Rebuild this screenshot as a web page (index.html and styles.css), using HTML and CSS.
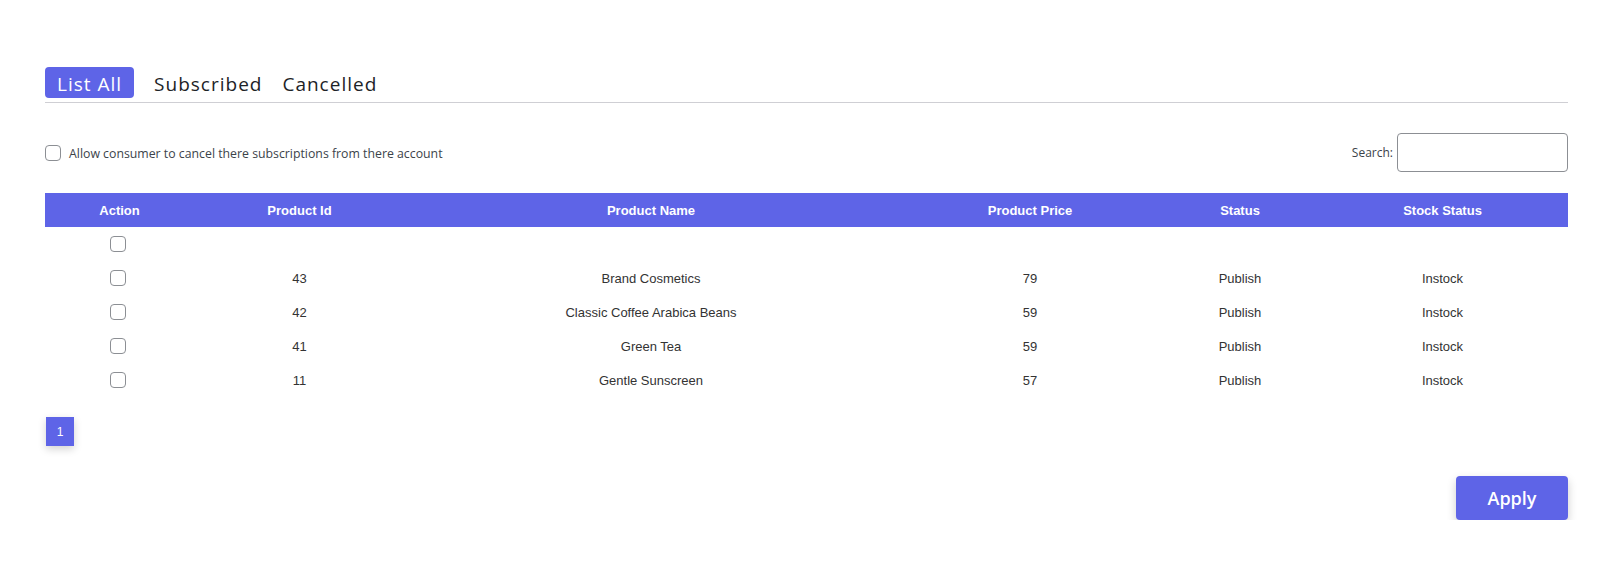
FILE: index.html
```html
<!DOCTYPE html>
<html lang="en">
<head>
<meta charset="utf-8">
<title>Subscriptions</title>
<link rel="stylesheet" href="styles.css">
</head>
<body>
<div class="wrap">
  <nav class="tabs">
    <a class="tab active">List All</a>
    <a class="tab">Subscribed</a>
    <a class="tab">Cancelled</a>
  </nav>

  <div class="toolbar">
    <label class="allow"><span class="cb"></span>Allow consumer to cancel there subscriptions from there account</label>
    <label class="search">Search:<span class="search-input"></span></label>
  </div>

  <table class="grid">
    <colgroup>
      <col class="c1"><col class="c2"><col class="c3"><col class="c4"><col class="c5"><col class="c6">
    </colgroup>
    <thead>
      <tr><th>Action</th><th>Product Id</th><th>Product Name</th><th>Product Price</th><th>Status</th><th>Stock Status</th></tr>
    </thead>
    <tbody>
      <tr><td><span class="cb"></span></td><td></td><td></td><td></td><td></td><td></td></tr>
      <tr><td><span class="cb"></span></td><td>43</td><td>Brand Cosmetics</td><td>79</td><td>Publish</td><td>Instock</td></tr>
      <tr><td><span class="cb"></span></td><td>42</td><td>Classic Coffee Arabica Beans</td><td>59</td><td>Publish</td><td>Instock</td></tr>
      <tr><td><span class="cb"></span></td><td>41</td><td>Green Tea</td><td>59</td><td>Publish</td><td>Instock</td></tr>
      <tr><td><span class="cb"></span></td><td>11</td><td>Gentle Sunscreen</td><td>57</td><td>Publish</td><td>Instock</td></tr>
    </tbody>
  </table>

  <div class="pager"><span class="page">1</span></div>

  <div class="actions"><button class="apply">Apply</button></div>
</div>
</body>
</html>
```

FILE: styles.css
```css
html, body {
  margin: 0;
  padding: 0;
  background: #ffffff;
}
.wrap {
  padding: 67px 46px 0 45px;
  font-family: "Open Sans", "Noto Sans", sans-serif;
  color: #3c434a;
}
.tabs {
  display: flex;
  align-items: center;
  padding-bottom: 4px;
  border-bottom: 1px solid #cfcfd4;
}
.tab {
  display: block;
  font-size: 19px;
  letter-spacing: 1px;
  line-height: 28px;
  padding: 3px 6px 0 6px;
  margin-right: 8px;
  color: #1d2327;
  border-radius: 4px;
}
.tab.active {
  padding: 3px 12px 0 12px;
  margin-right: 14px;
  background: #5e64e7;
  color: #ffffff;
}
.toolbar {
  display: flex;
  justify-content: space-between;
  align-items: center;
  margin-top: 30px;
  height: 39px;
}
.allow {
  display: flex;
  align-items: center;
  font-size: 12.3px;
  padding-top: 1px;
}
.cb {
  display: inline-block;
  width: 14px;
  height: 14px;
  border: 1px solid #8c8f94;
  border-radius: 4px;
  background: #fff;
  box-sizing: content-box;
}
.allow .cb {
  margin-right: 8px;
}
.search {
  display: flex;
  align-items: center;
  font-size: 12px;
}
.search-input {
  display: block;
  width: 169px;
  height: 37px;
  margin-left: 4px;
  border: 1px solid #8c8f94;
  border-radius: 4px;
  background: #fff;
}
.grid {
  width: 100%;
  margin-top: 21px;
  border-collapse: collapse;
  table-layout: fixed;
  font-family: "Liberation Sans", Arial, sans-serif;
  font-size: 13px;
  color: #333333;
}
.c1 { width: 149px; }
.c2 { width: 211px; }
.c3 { width: 492px; }
.c4 { width: 266px; }
.c5 { width: 154px; }
.c6 { width: auto; }
.grid th {
  background: #5e64e7;
  color: #ffffff;
  font-weight: bold;
  height: 34px;
  padding: 0 10px;
  text-align: center;
}
.grid td {
  height: 34px;
  padding: 0 10px;
  text-align: center;
  vertical-align: middle;
}
.grid td .cb {
  vertical-align: middle;
  margin: -2px 4px 0 0;
}
.pager {
  display: flex;
  margin-top: 20px;
}
.page {
  display: flex;
  align-items: center;
  justify-content: center;
  width: 28px;
  height: 29px;
  margin-left: 1px;
  background: #5e64e7;
  color: #fff;
  font-family: "Liberation Sans", Arial, sans-serif;
  font-size: 12px;
  box-shadow: 0 3px 8px rgba(0, 0, 0, 0.18);
}
.actions {
  display: flex;
  justify-content: flex-end;
  margin-top: 30px;
}
.apply {
  width: 112px;
  height: 44px;
  border: none;
  border-radius: 4px;
  background: #5e64e7;
  color: #ffffff;
  font-family: "Open Sans", sans-serif;
  font-weight: 600;
  font-size: 18px;
  box-shadow: 0 4px 10px rgba(0, 0, 0, 0.2);
  cursor: pointer;
}
```
